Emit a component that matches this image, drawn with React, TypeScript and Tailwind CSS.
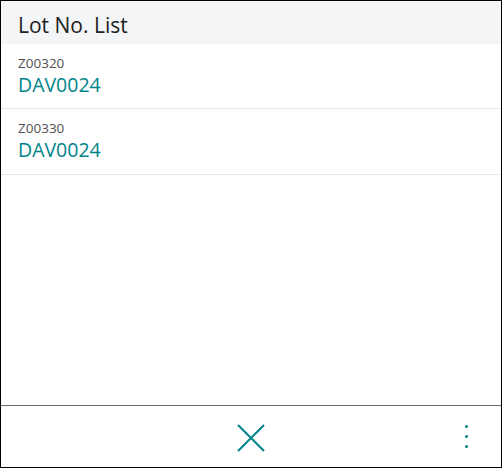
const rows = [
  { lot: "Z00320", item: "DAV0024" },
  { lot: "Z00330", item: "DAV0024" },
];

const App = () => {
  return (
    <div
      className="w-[502px] h-[468px] border border-black bg-white flex flex-col"
      style={{ fontFamily: '"Open Sans", "Noto Sans", sans-serif' }}
    >
      <div className="h-[43px] bg-[#f4f5f7] flex items-center pl-[17px]">
        <h1 className="text-[21px] text-[#212121] leading-none pt-[5px]">Lot No. List</h1>
      </div>

      <ul className="flex-1">
        {rows.map((row, i) => (
          <li
            key={row.lot}
            className={`border-b border-[#e6e6e6] pl-[17px] pt-[10px] ${i === 0 ? "h-[65px]" : "h-[66px]"}`}
          >
            <div className="text-[13.5px] leading-[18px] text-[#505050]">{row.lot}</div>
            <div className="text-[19.5px] leading-[26px] text-[#00838a]">{row.item}</div>
          </li>
        ))}
      </ul>

      <div className="h-[62px] border-t border-[#6b6b6b] flex items-center relative">
        <button className="mx-auto flex items-center justify-center w-[40px] h-[40px] mt-[3px]">
          <svg width="28" height="28" viewBox="0 0 28 28" fill="none">
            <path d="M1 1 L27 27 M27 1 L1 27" stroke="#00838a" strokeWidth="2" />
          </svg>
        </button>
        <button className="absolute right-[33px] top-[19px] flex flex-col gap-[7px] items-center">
          <span className="w-[3px] h-[3px] rounded-full bg-[#00838a]" />
          <span className="w-[3px] h-[3px] rounded-full bg-[#00838a]" />
          <span className="w-[3px] h-[3px] rounded-full bg-[#00838a]" />
        </button>
      </div>
    </div>
  );
};

export default App;
